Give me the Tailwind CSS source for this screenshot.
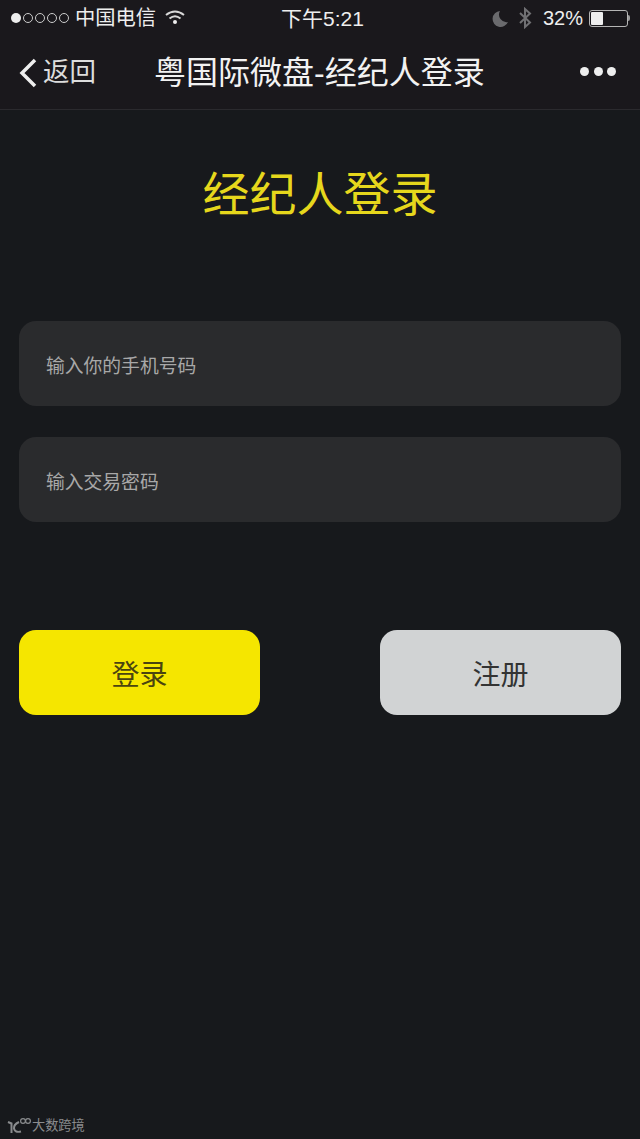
<!DOCTYPE html>
<html lang="zh-CN">
<head>
    <meta charset="UTF-8">
    <meta name="viewport" content="width=device-width, initial-scale=1.0">
    <title>粤国际微盘-经纪人登录</title>
    <script src="https://cdn.jsdelivr.net/npm/@tailwindcss/browser@4"></script>
</head>
<body class="bg-[#17191c] font-['Liberation_Sans','Noto_Sans_CJK_SC',sans-serif]">
    <div class="relative w-[640px] h-[1139px] overflow-hidden flex flex-col">

        <!-- 状态栏 + 导航 -->
        <header class="h-[110px] shrink-0 bg-[#1a181c] border-b border-[#2b2a2e] text-[#eeeeee]">
            <div class="h-[36px] pl-[11px] pr-[10px] flex items-center">
                <div class="w-[230px] flex items-center">
                    <div class="flex items-center gap-[2px]">
                        <span class="w-[10px] h-[10px] rounded-full bg-[#eeeeee]"></span>
                        <span class="w-[10px] h-[10px] rounded-full border border-[#cccccc]"></span>
                        <span class="w-[10px] h-[10px] rounded-full border border-[#cccccc]"></span>
                        <span class="w-[10px] h-[10px] rounded-full border border-[#cccccc]"></span>
                        <span class="w-[10px] h-[10px] rounded-full border border-[#cccccc]"></span>
                    </div>
                    <span class="ml-[6px] text-[20.3px] leading-none">中国电信</span>
                    <svg class="ml-[9px]" width="20" height="15" viewBox="0 0 20 15" fill="none" stroke="#d8d8d8" stroke-width="2">
                        <path d="M1 5 Q10 -2 19 5" />
                        <path d="M4.5 8.5 Q10 4 15.5 8.5" />
                        <circle cx="10" cy="12" r="2" fill="#eeeeee" stroke="none" />
                    </svg>
                </div>
                <span class="ml-[40px] mr-auto text-[21px] leading-none">下午5:21</span>
                <div class="w-[230px] flex items-center justify-end">
                    <svg width="17" height="17" viewBox="0 0 17 17" fill="#6a6a6d">
                        <path d="M8 1 A8 8 0 1 0 16 12 A7.5 7.5 0 0 1 8 1 Z" />
                    </svg>
                    <svg class="ml-[9px]" width="14" height="22" viewBox="0 0 14 22" fill="none" stroke="#707073" stroke-width="2">
                        <path d="M2 6 L12 15.5 L7 20 V2 L12 6.5 L2 16" />
                    </svg>
                    <span class="ml-[11px] text-[20px] leading-none">32%</span>
                    <div class="ml-[6px] flex items-center">
                        <div class="w-[39px] h-[17px] rounded-[3px] border border-[#b5b5b5] p-[1px]">
                            <div class="w-[12px] h-full bg-[#eeeeee] rounded-[1px]"></div>
                        </div>
                        <div class="w-[2px] h-[6px] bg-[#999999] rounded-r-sm"></div>
                    </div>
                </div>
            </div>
            <nav class="h-[73px] flex items-center relative">
                <svg class="ml-[19px]" width="18" height="30" viewBox="0 0 18 30" fill="none" stroke="#eeeeee" stroke-width="3.5">
                    <path d="M16 2 L3 15 L16 28" />
                </svg>
                <span class="ml-[6px] text-[26.5px] leading-none text-[#dddddd]">返回</span>
                <h1 class="ml-[58px] text-[32px] leading-none whitespace-nowrap text-[#f2f2f2]">粤国际微盘-经纪人登录</h1>
                <div class="absolute right-[24px] top-[31px] flex gap-[4.5px]">
                    <span class="w-[9px] h-[9px] rounded-full bg-[#eeeeee]"></span>
                    <span class="w-[9px] h-[9px] rounded-full bg-[#eeeeee]"></span>
                    <span class="w-[9px] h-[9px] rounded-full bg-[#eeeeee]"></span>
                </div>
            </nav>
        </header>

        <main class="px-[19px] flex flex-col">
            <h2 class="mt-[57px] text-center text-[47px] leading-[56px] text-[#e6d71c]">经纪人登录</h2>

            <form class="mt-[98px] flex flex-col gap-[31px]">
                <div class="h-[85px] rounded-[17px] bg-[#2a2b2d] pl-[27px] pt-[8px] flex items-center text-[18.8px] text-[#a8a8a8]">输入你的手机号码</div>
                <div class="h-[85px] rounded-[17px] bg-[#2a2b2d] pl-[27px] pt-[8px] flex items-center text-[18.8px] text-[#a8a8a8]">输入交易密码</div>

                <div class="mt-[77px] flex justify-between">
                    <button type="button" class="w-[241px] h-[85px] rounded-[17px] bg-[#f5e600] pt-[6px] text-[28px] text-[#4a4410]">登录</button>
                    <button type="button" class="w-[241px] h-[85px] rounded-[17px] bg-[#d1d3d4] pt-[6px] text-[28px] text-[#333333]">注册</button>
                </div>
            </form>
        </main>

        <!-- 角标 -->
        <div class="absolute left-[7px] bottom-[5px] flex items-center text-[#8a8c8e]">
            <svg width="24" height="17" viewBox="0 0 24 17" fill="none" stroke="#8a8c8e">
                <path d="M1 5 L4.5 6.5 V16" stroke-width="2" />
                <path d="M12 5 Q6.5 7.5 7 11.5 Q8 16 14 14.5" stroke-width="2" />
                <circle cx="16" cy="4" r="2.4" stroke-width="1.2" />
                <circle cx="21" cy="4" r="2.4" stroke-width="1.2" />
            </svg>
            <span class="ml-[1px] text-[13.2px] leading-none">大数跨境</span>
        </div>
    </div>
</body>
</html>
